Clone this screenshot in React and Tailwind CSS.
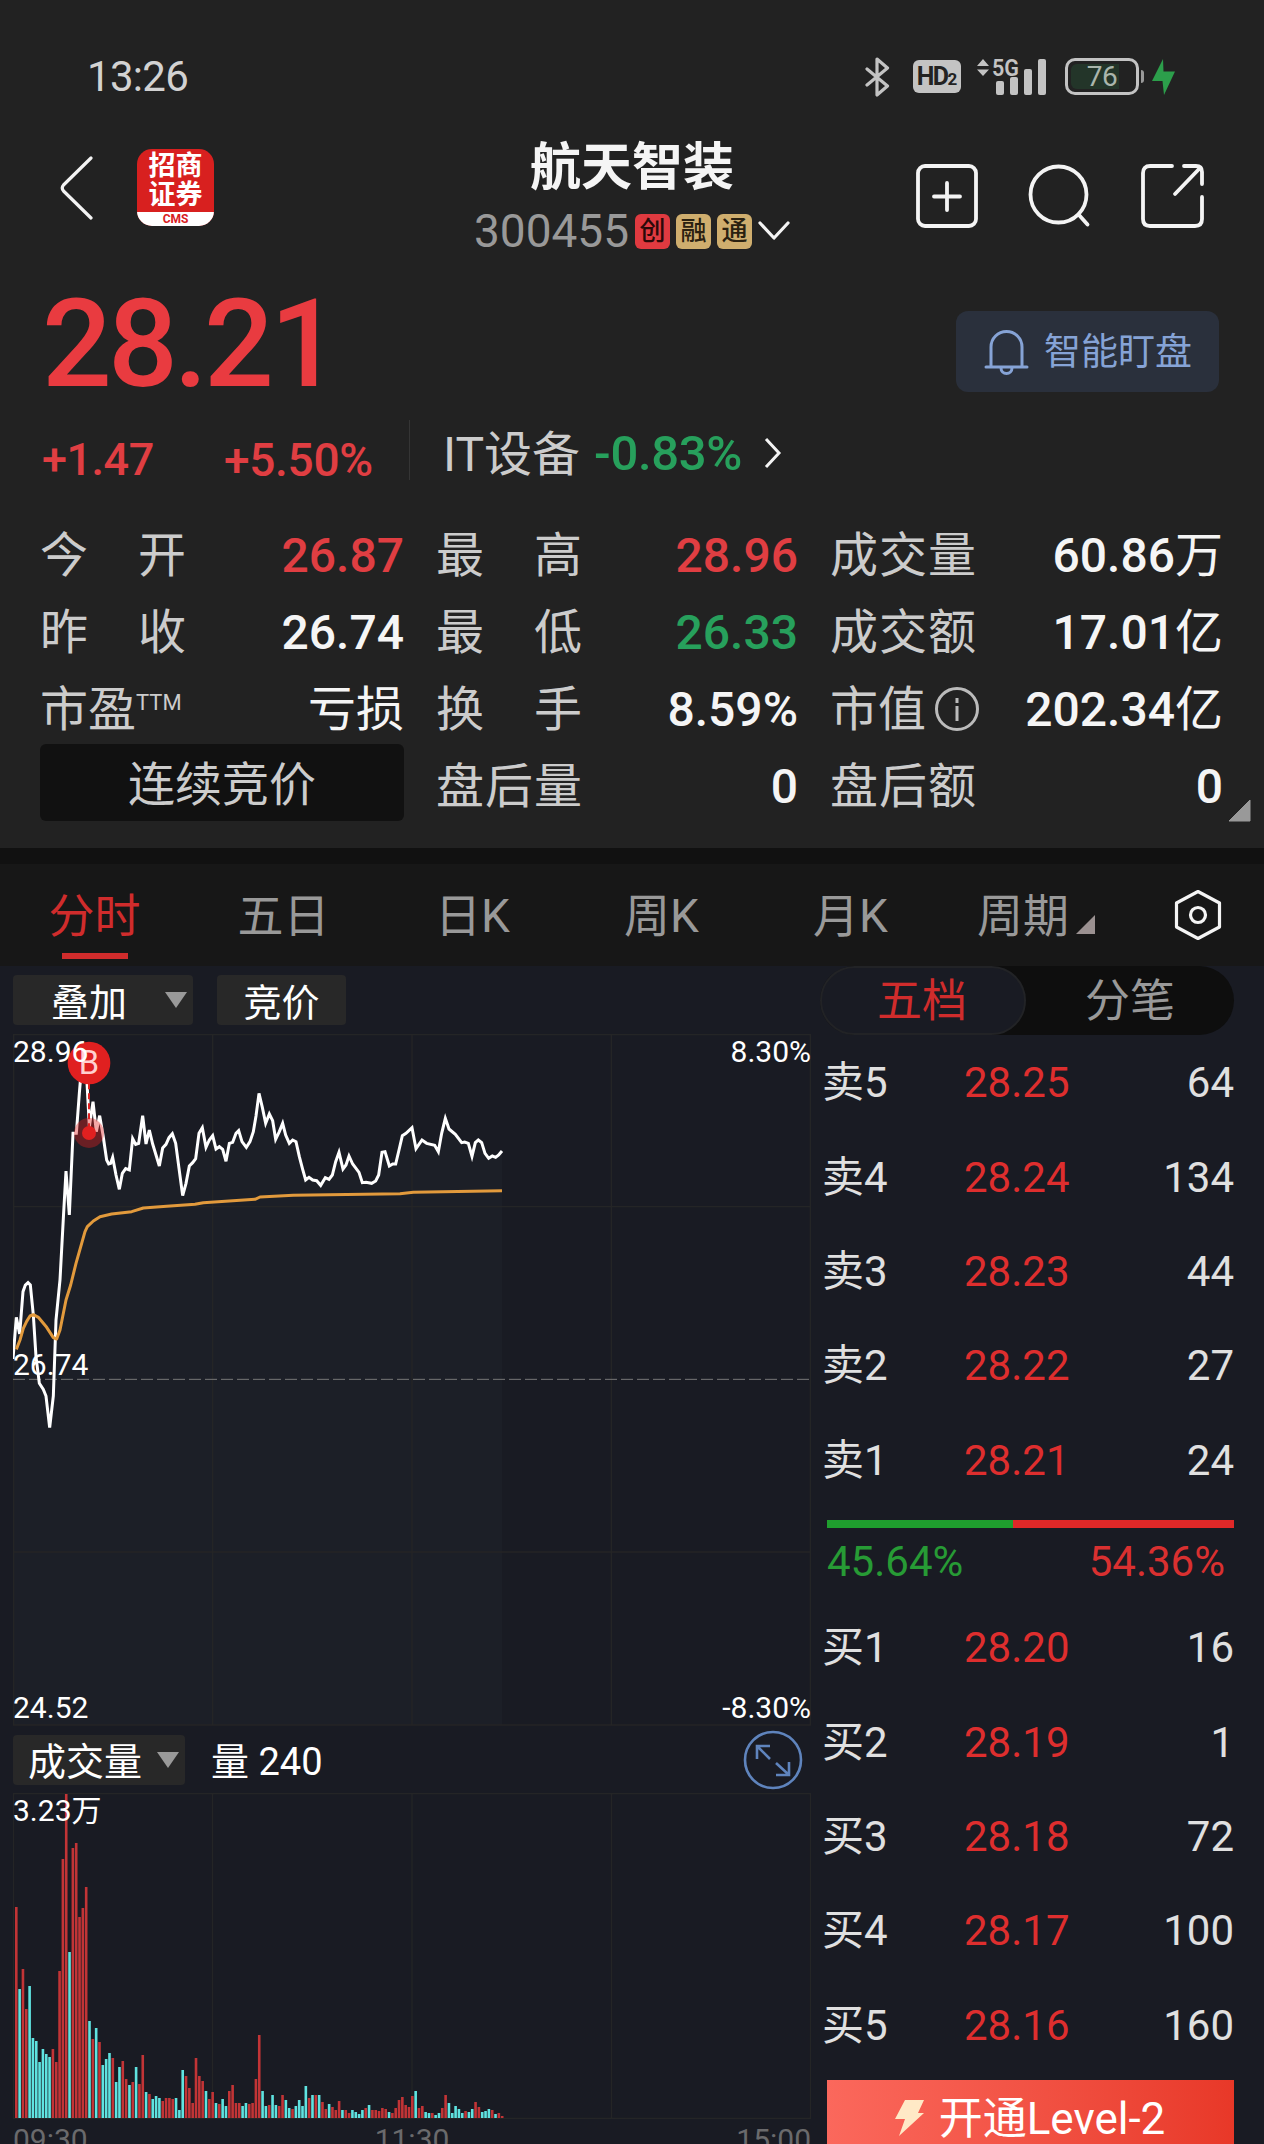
import { Fragment } from "react";

const STATS = [
  { label: ["今", "开"], value: "26.87", tone: "text-[#e03e42]" },
  { label: ["最", "高"], value: "28.96", tone: "text-[#e03e42]" },
  { label: ["成", "交", "量"], value: "60.86", unit: "万" },
  { label: ["昨", "收"], value: "26.74" },
  { label: ["最", "低"], value: "26.33", tone: "text-[#27a05c]" },
  { label: ["成", "交", "额"], value: "17.01", unit: "亿" },
  { label: ["市", "盈"], value: "", unit: "亏损", ttm: true },
  { label: ["换", "手"], value: "8.59%" },
  { label: ["市", "值"], value: "202.34", unit: "亿", info: true },
  { phase: "连续竞价" },
  { label: ["盘", "后", "量"], value: "0" },
  { label: ["盘", "后", "额"], value: "0" },
];

const TABS = ["分时", "五日", "日K", "周K", "月K"];

const SELL = [
  ["卖5", "28.25", "64"],
  ["卖4", "28.24", "134"],
  ["卖3", "28.23", "44"],
  ["卖2", "28.22", "27"],
  ["卖1", "28.21", "24"],
];

const BUY = [
  ["买1", "28.20", "16"],
  ["买2", "28.19", "1"],
  ["买3", "28.18", "72"],
  ["买4", "28.17", "100"],
  ["买5", "28.16", "160"],
];

// chart units are a third of a pixel
const PRICE =
  "39,1197 49,1072 59,1122 69,995 76,975 84,968 91,975 100,1065 108,1190 118,1270 130,1288 138,1308 149,1403 160,1308 168,1080 180,960 190,775 198,633 208,765 219,520 229,520 238,400 243,340 251,300 259,330 268,500 279,425 289,515 299,467 309,525 320,600 326,612 332,610 338,592 348,645 358,688 367,640 377,626 388,630 398,536 407,553 416,550 428,467 438,552 448,510 458,552 468,585 478,618 488,564 498,553 507,533 517,521 527,550 537,625 548,707 558,670 568,618 578,608 587,596 597,520 607,503 618,562 628,540 638,527 648,567 658,560 668,568 678,604 688,550 698,547 708,520 716,512 726,545 739,562 750,545 760,515 768,468 777,400 787,442 797,490 808,462 818,482 827,538 838,515 848,490 857,525 868,550 878,540 888,545 898,590 908,628 917,660 927,652 938,660 950,662 962,676 976,653 987,658 997,645 1007,605 1017,577 1029,627 1038,615 1047,588 1058,612 1068,625 1077,637 1087,668 1098,667 1115,670 1127,663 1136,645 1146,577 1155,575 1168,618 1178,612 1187,612 1197,570 1207,527 1218,520 1236,503 1248,566 1266,540 1280,550 1304,556 1315,575 1325,520 1336,475 1347,507 1366,523 1385,548 1394,546 1405,550 1416,589 1426,548 1435,540 1445,548 1455,580 1466,595 1477,588 1487,592 1496,585 1506,573";

const AVERAGE =
  "49,1168 60,1140 70,1105 80,1084 90,1068 100,1064 115,1072 140,1102 160,1133 170,1137 180,1110 198,1020 212,975 228,910 245,850 255,815 262,800 280,783 300,770 335,762 395,755 430,744 500,739 585,733 610,728 765,718 780,711 880,706 1200,701 1240,697 1506,692";

// one bar a minute: r = up, c = down, then the height
const VOLUME =
  "r211 c129 r149 r109 c132 c80 c77 c56 c69 c64 c61 r69 r56 r147 r259 r324 c166 r270 r275 r201 r210 r231 c97 r79 c90 r76 c53 c59 c65 r60 c36 c51 r57 r39 c33 r36 c51 r34 r63 c26 r24 c19 c22 c20 r17 r20 r20 r19 c20 c8 c48 r42 r30 r15 r60 r42 r37 c27 r19 r26 c15 r14 c19 c12 r27 r33 r15 r15 c12 c15 r14 r15 r39 r83 c27 c12 r13 c23 c13 r12 r23 c18 c10 r9 c12 c18 c12 c32 r20 c23 r23 c23 r16 r9 c14 r11 r8 r17 c8 r8 r5 c8 c6 c4 c8 r10 c13 r8 r8 r7 r10 r9 c6 r5 r10 r18 r21 r13 r11 r22 c27 r10 r12 c6 c5 r5 c3 c5 r10 r23 c15 c5 c12 c9 c5 r7 c6 c9 r16 r11 c6 c7 c9 r8 c4 r5 r2".split(" ");

function StatusBar() {
  return (
    <div className="flex h-[112px] items-center justify-between pt-[41px] pr-[88px] pl-[87px]">
      <span className="text-[42px] leading-none tracking-[-0.7px] text-[#d2d2d2]">13:26</span>
      <div className="flex items-center text-[#c3c3c3]">
        <svg width="25" height="40" viewBox="0 0 24 40" fill="none" stroke="currentColor" strokeWidth="3.200" strokeLinejoin="round" strokeLinecap="round">
          <path d="M1.500 12 22 29 11.500 38V2l10.500 9L1.500 28" />
        </svg>
        <span className="ml-[23px] flex h-[33px] w-[48px] items-center justify-center rounded-[6px] bg-[#c3c3c3] font-bold text-[#222]">
          <span className="text-[25px] leading-none tracking-[-1.5px]">HD</span>
          <span className="self-end pb-[5px] text-[17px] leading-none">2</span>
        </span>
        <svg className="ml-[16px] overflow-visible" width="70" height="40" viewBox="0 0 70 40" fill="currentColor">
          <path d="M0 9 6 2l6 7zM0 12.500l6 6.500 6-6.500z" />
          <text x="15" y="19" fontSize="24" fontWeight="600" textLength="27" lengthAdjust="spacingAndGlyphs">5G</text>
          <rect x="19" y="24" width="8" height="14" rx="2" />
          <rect x="33" y="20" width="8" height="18" rx="2" />
          <rect x="47" y="12" width="8" height="26" rx="2" />
          <rect x="61" y="2" width="8" height="36" rx="2" />
        </svg>
        <span className="ml-[18px] flex h-[37px] w-[74px] items-center justify-center rounded-[10px] border-3 border-[#c3c3c3] p-[3px]">
          <span className="flex h-full w-full items-center justify-center rounded-[6px] bg-[linear-gradient(90deg,#233529_78%,#222_78%)] text-[28px] leading-none tracking-[-0.5px] text-[#aab5ac]">
            76
          </span>
        </span>
        <span className="ml-[2px] h-[13px] w-[3px] rounded-r-sm bg-[#999]" />
        <svg className="ml-[8px]" width="24" height="38" viewBox="0 0 24 38" fill="#2c9e4b">
          <path d="M11 1 0 23h10.500l1.500 14L23 13.500H11.500z" />
        </svg>
      </div>
    </div>
  );
}

function NavBar() {
  return (
    <div className="grid h-[160px] grid-cols-3 items-start pr-[60px] pl-[60px]">
      <div className="flex items-center pt-[37px]">
        <svg width="34" height="64" viewBox="0 0 34 64" fill="none" stroke="#f4f4f4" strokeWidth="3.200" strokeLinecap="round" strokeLinejoin="round">
          <path d="M31 2 3.500 29q-2.500 3 0 6L31 62" />
        </svg>
        <div className="ml-[43px] flex h-[77px] w-[77px] flex-col overflow-hidden rounded-[15px] bg-[#d8201f]">
          <div className="flex-1 pt-[3px] text-center text-[27px] leading-[29px] font-bold text-white">
            <div>招商</div>
            <div>证券</div>
          </div>
          <div className="h-[14px] bg-white text-center text-[12px] leading-[14px] font-bold text-[#d8201f]">CMS</div>
        </div>
      </div>
      <div className="flex flex-col items-center pt-[29px] whitespace-nowrap">
        <h1 className="text-[51px] leading-[54px] font-bold text-[#f5f5f5]">航天智装</h1>
        <div className="mt-[10px] flex items-center gap-[6px]">
          <span className="text-[46px] leading-[52px] text-[#999]">300455</span>
          <span className="flex size-[35px] items-center justify-center rounded-[6px] bg-[#e03a40] text-[26px] leading-none font-medium text-[#2a0909]">创</span>
          <span className="flex size-[35px] items-center justify-center rounded-[6px] bg-[#cfae6e] text-[26px] leading-none font-medium text-[#2a2110]">融</span>
          <span className="flex size-[35px] items-center justify-center rounded-[6px] bg-[#cfae6e] text-[26px] leading-none font-medium text-[#2a2110]">通</span>
          <svg width="32" height="20" viewBox="0 0 32 20" fill="none" stroke="#f4f4f4" strokeWidth="3.200" strokeLinecap="round" strokeLinejoin="round">
            <path d="m2 2 14 15L30 2" />
          </svg>
        </div>
      </div>
      <div className="flex justify-end gap-[50px] pt-[52px]">
        <svg width="62" height="64" viewBox="0 0 62 64" fill="none" stroke="#f4f4f4" strokeWidth="3.800" strokeLinecap="round">
          <rect x="2" y="2" width="58" height="60" rx="7" />
          <path d="M31 19v27M18 32.500h26" />
        </svg>
        <svg width="63" height="64" viewBox="0 0 63 64" fill="none" stroke="#f4f4f4" strokeWidth="3.800" strokeLinecap="round">
          <circle cx="30.500" cy="30.500" r="28" />
          <path d="m51 51 8.500 9.500" />
        </svg>
        <svg width="63" height="64" viewBox="0 0 63 64" fill="none" stroke="#f4f4f4" strokeWidth="3.800" strokeLinecap="round" strokeLinejoin="round">
          <path d="M31 2H9Q2 2 2 9v46q0 7 7 7h45q7 0 7-7V33M43 2h12q6 0 6 6v12M59 4 34 30" />
        </svg>
      </div>
    </div>
  );
}

function Quote() {
  return (
    <>
      <div className="flex h-[140px] items-center justify-between pr-[45px] pl-[42px]">
        <span className="pt-[5px] text-[123px] leading-none font-medium tracking-[-4px] text-[#e93b40]">28.21</span>
        <button className="mt-[19px] flex h-[81px] w-[263px] items-center rounded-[12px] bg-[#2a303c] pl-[28px] text-[37px] leading-none text-[#86a3d6]">
          <svg className="mr-[15px]" width="45" height="46" viewBox="0 0 45 46" fill="none" stroke="currentColor" strokeWidth="3" strokeLinecap="round">
            <path d="M7 38V18a15.500 15.500 0 0 1 31 0v20M2 38h41M17 39a5.500 5.500 0 0 0 11 0" />
          </svg>
          <span className="pt-[2px]">智能盯盘</span>
        </button>
      </div>
      <div className="flex h-[105px] items-start whitespace-nowrap">
        <span className="w-[182px] pt-[25px] pl-[42px] text-[45px] leading-none font-medium tracking-[-0.5px] text-[#e03e42]">+1.47</span>
        <span className="w-[227px] pt-[25px] pl-[42px] text-[46px] leading-none font-medium tracking-[-0.3px] text-[#e03e42]">+5.50%</span>
        <span className="mt-[8px] h-[60px] w-px bg-[#353535]" />
        <span className="pt-[19px] pl-[33px] text-[48px] leading-none text-[#ccc]">IT设备</span>
        <span className="pt-[17px] pl-[14px] text-[49px] leading-none font-medium tracking-[-0.3px] text-[#27a05c]">-0.83%</span>
        <svg className="mt-[25px] ml-[21px]" width="20" height="32" viewBox="0 0 20 32" fill="none" stroke="#f4f4f4" strokeWidth="3">
          <path d="m3 2 13 14L3 30" />
        </svg>
      </div>
    </>
  );
}

function Stats() {
  return (
    <div className="relative grid h-[331px] grid-cols-[364px_362px_393px] grid-rows-[repeat(4,77px)] gap-x-[32px] pl-[40px]">
      {STATS.map((s, i) =>
        s.phase ? (
          <div key={i} className="-mt-[4px] mb-[4px] flex items-center justify-center rounded-[6px] bg-[#111] pt-[3px] text-[47px] leading-none text-[#ccc]">{s.phase}</div>
        ) : (
          <div key={i} className="flex items-center justify-between pt-[1px] text-[48px] leading-none whitespace-nowrap">
            <span className={s.ttm || s.info ? "flex items-center text-[#ccc]" : "flex w-[146px] items-center justify-between text-[#ccc]"}>
              {s.label.map((c) => <span key={c}>{c}</span>)}
              {s.ttm && <span className="self-start text-[22px] leading-[34px]">TTM</span>}
              {s.info && (
                <svg className="ml-[8px]" width="46" height="46" viewBox="0 0 46 46" fill="none" stroke="#bbb" strokeWidth="3">
                  <circle cx="23" cy="22" r="20.500" />
                  <path d="M23 19v15M23 11v5" />
                </svg>
              )}
            </span>
            <span className={s.tone || "text-[#f5f5f5]"}>
              <span className="font-medium">{s.value}</span>
              {s.unit}
            </span>
          </div>
        )
      )}
      <svg className="absolute right-[13px] bottom-[26px]" width="23" height="23" viewBox="0 0 23 23" fill="#999">
        <path d="M22 1v21H1z" stroke="#999" strokeLinejoin="round" />
      </svg>
    </div>
  );
}

function PeriodTabs() {
  return (
    <div className="flex h-[102px] items-center bg-[#171717] text-[46px] leading-none text-[#999]">
      {TABS.map((t, i) => (
        <div key={t} className="relative flex h-full w-[189px] items-center justify-center pt-[2px]">
          <span className={i === 0 ? "text-[#d02c2c]" : ""}>{t}</span>
          {i === 0 && <span className="absolute bottom-[7px] left-[62px] h-[6px] w-[66px] bg-[#d02c2c]" />}
        </div>
      ))}
      <div className="flex w-[189px] items-center pt-[2px] pl-[32px]">
        周期
        <svg className="mt-[16px] ml-[7px]" width="19" height="19" viewBox="0 0 19 19" fill="#9b9191">
          <path d="M19 0v19H0z" />
        </svg>
      </div>
      <svg className="ml-[40px]" width="48" height="52" viewBox="0 0 48 52" fill="none" stroke="#f4f4f4" strokeWidth="3.200" strokeLinejoin="round">
        <path d="M24 2.500 45.500 14v24L24 49.500 2.500 38V14z" />
        <circle cx="24" cy="26" r="7.500" />
      </svg>
    </div>
  );
}

function DownTriangle() {
  return (
    <svg width="22" height="16" viewBox="0 0 22 16" fill="#999">
      <path d="M0 0h22L11 16z" />
    </svg>
  );
}

function PriceChart() {
  return (
    <div className="relative mt-[9px] h-[692px] w-[798px] text-[30px] leading-none text-white">
      <svg width="798" height="692" viewBox="39 222 2394 2076" fill="none">
        <polygon points={`39,2295 ${PRICE} 1506,2295`} fill="#1c1f27" />
        <g stroke="#242526" strokeWidth="4">
          <path d="M41 224H2431V2295H41zM638 222v2073M1236 222v2073M1834 222v2073M39 740h2394M39 1776h2394" />
        </g>
        <path d="M39 1258h2394" stroke="#777" strokeWidth="3" strokeDasharray="36 12" />
        <polyline points={PRICE} stroke="#fff" strokeWidth="9" />
        <polyline points={AVERAGE} stroke="#e29a3c" strokeWidth="9" strokeLinejoin="round" />
        <circle cx="267" cy="519" r="45" fill="#e02020" fillOpacity=".4" />
        <path d="M267 370v140" stroke="#e02020" strokeWidth="6" strokeDasharray="18 12" />
        <circle cx="267" cy="519" r="21" fill="#e02020" />
        <circle cx="267" cy="309" r="64" fill="#e02020" />
        <text x="267" y="343" textAnchor="middle" fontSize="98" fill="#ffd0d0">B</text>
      </svg>
      <span className="absolute top-[3px] left-0">28.96</span>
      <span className="absolute top-[3px] right-0">8.30%</span>
      <span className="absolute top-[316px] left-0">26.74</span>
      <span className="absolute bottom-[3px] left-0">24.52</span>
      <span className="absolute right-0 bottom-[3px]">-8.30%</span>
    </div>
  );
}

function VolumeChart() {
  return (
    <div className="relative h-[326px] w-[798px] text-[30px] leading-none text-white">
      <svg width="798" height="326" viewBox="0 0 798 326" fill="none">
        <path d="M.5.500h797v325H.5zM199.500 0v325M399 0v325M598.500 0v325" stroke="#242526" strokeWidth="1.300" />
        {VOLUME.map((v, i) => {
          const h = Number(v.slice(1));
          return <rect key={i} x={2 + i * 3.328} y={325 - h} width="2.600" height={h} fill={v[0] === "r" ? "#c23436" : "#5fe3e0"} />;
        })}
      </svg>
      <span className="absolute top-[3px] left-0">3.23万</span>
    </div>
  );
}

function ChartColumn() {
  return (
    <div className="w-[811px] pl-[13px]">
      <div className="flex gap-[24px] pt-[9px] text-[38px] leading-none text-white">
        <div className="flex h-[50px] w-[180px] items-center justify-between rounded-[4px] bg-[#282828] pr-[6px] pl-[38px]">
          <span className="pt-[5px]">叠加</span>
          <DownTriangle />
        </div>
        <div className="flex h-[50px] w-[129px] items-center justify-center rounded-[4px] bg-[#282828] pt-[5px]">竞价</div>
      </div>
      <PriceChart />
      <div className="flex h-[67px] items-center text-[38px] leading-none text-white">
        <div className="flex h-[50px] w-[172px] items-center justify-between rounded-[4px] bg-[#282828] pr-[6px] pl-[15px]">
          <span className="pt-[5px]">成交量</span>
          <DownTriangle />
        </div>
        <span className="pt-[5px] pl-[26px]">量 240</span>
        <svg className="mr-[8px] ml-auto" width="60" height="60" viewBox="0 0 60 60" fill="none" stroke="#5f84bd" strokeWidth="2.600">
          <circle cx="30" cy="30" r="28" />
          <path d="M14 29V16h13M15 17l12 12M46 32v13H33M45 44 33 33" />
        </svg>
      </div>
      <VolumeChart />
      <div className="flex justify-between pt-[6px] text-[30px] leading-none text-[#6a6a6c]">
        <span>09:30</span>
        <span>11:30</span>
        <span>15:00</span>
      </div>
    </div>
  );
}

function Depth({ rows }) {
  return rows.map(([name, price, qty]) => (
    <Fragment key={name}>
      <div className="flex h-[94.4px] items-center text-[42px] leading-none text-[#e0e0e0]">
        <span className="w-[142px]">{name}</span>
        <span className="text-[#de2e2e]">{price}</span>
        <span className="ml-auto">{qty}</span>
      </div>
    </Fragment>
  ));
}

function OrderBook() {
  return (
    <div className="w-[423px] pl-[9px]">
      <div className="flex h-[69px] w-[414px] rounded-full bg-[#0e0e0e] text-[45px] leading-none">
        <div className="flex w-[206px] items-center justify-center rounded-full border-2 border-[#222326] bg-[#191b23] pt-[2px] pr-[2px] text-[#d02c2c]">五档</div>
        <div className="flex flex-1 items-center justify-center pt-[2px] text-[#999]">分笔</div>
      </div>
      <div className="pt-px pl-[2px]">
        <Depth rows={SELL} />
        <div className="mt-[12px] ml-[5px] flex h-[8px]">
          <div className="w-[45.64%] bg-[#1f9e2e]" />
          <div className="flex-1 bg-[#e02828]" />
        </div>
        <div className="flex justify-between pt-[13px] pr-[9px] pb-[18px] pl-[5px] text-[42px] leading-none">
          <span className="text-[#279b35]">45.64%</span>
          <span className="text-[#d93030]">54.36%</span>
        </div>
        <Depth rows={BUY} />
        <button className="mt-[7px] ml-[5px] flex h-[77px] w-[407px] items-center justify-center bg-linear-to-r from-[#fb685c] to-[#e83828] pr-[2px] text-[44px] leading-none text-white">
          <svg className="mr-[13px]" width="32" height="38" viewBox="0 0 32 38" fill="#ffe9c6">
            <path d="M11 1h19l-6 13h6L5 37l6-17H1z" />
          </svg>
          <span className="pt-[2px]">开通Level-2</span>
        </button>
      </div>
    </div>
  );
}

export default function App() {
  return (
    <div className="h-[2144px] w-[1264px] overflow-hidden bg-[#191b23] font-[Roboto,'Noto_Sans_CJK_SC',sans-serif]">
      <header className="h-[848px] bg-[#222]">
        <StatusBar />
        <NavBar />
        <Quote />
        <Stats />
      </header>
      <div className="h-[16px] bg-[#111]" />
      <PeriodTabs />
      <main className="flex">
        <ChartColumn />
        <OrderBook />
      </main>
    </div>
  );
}
